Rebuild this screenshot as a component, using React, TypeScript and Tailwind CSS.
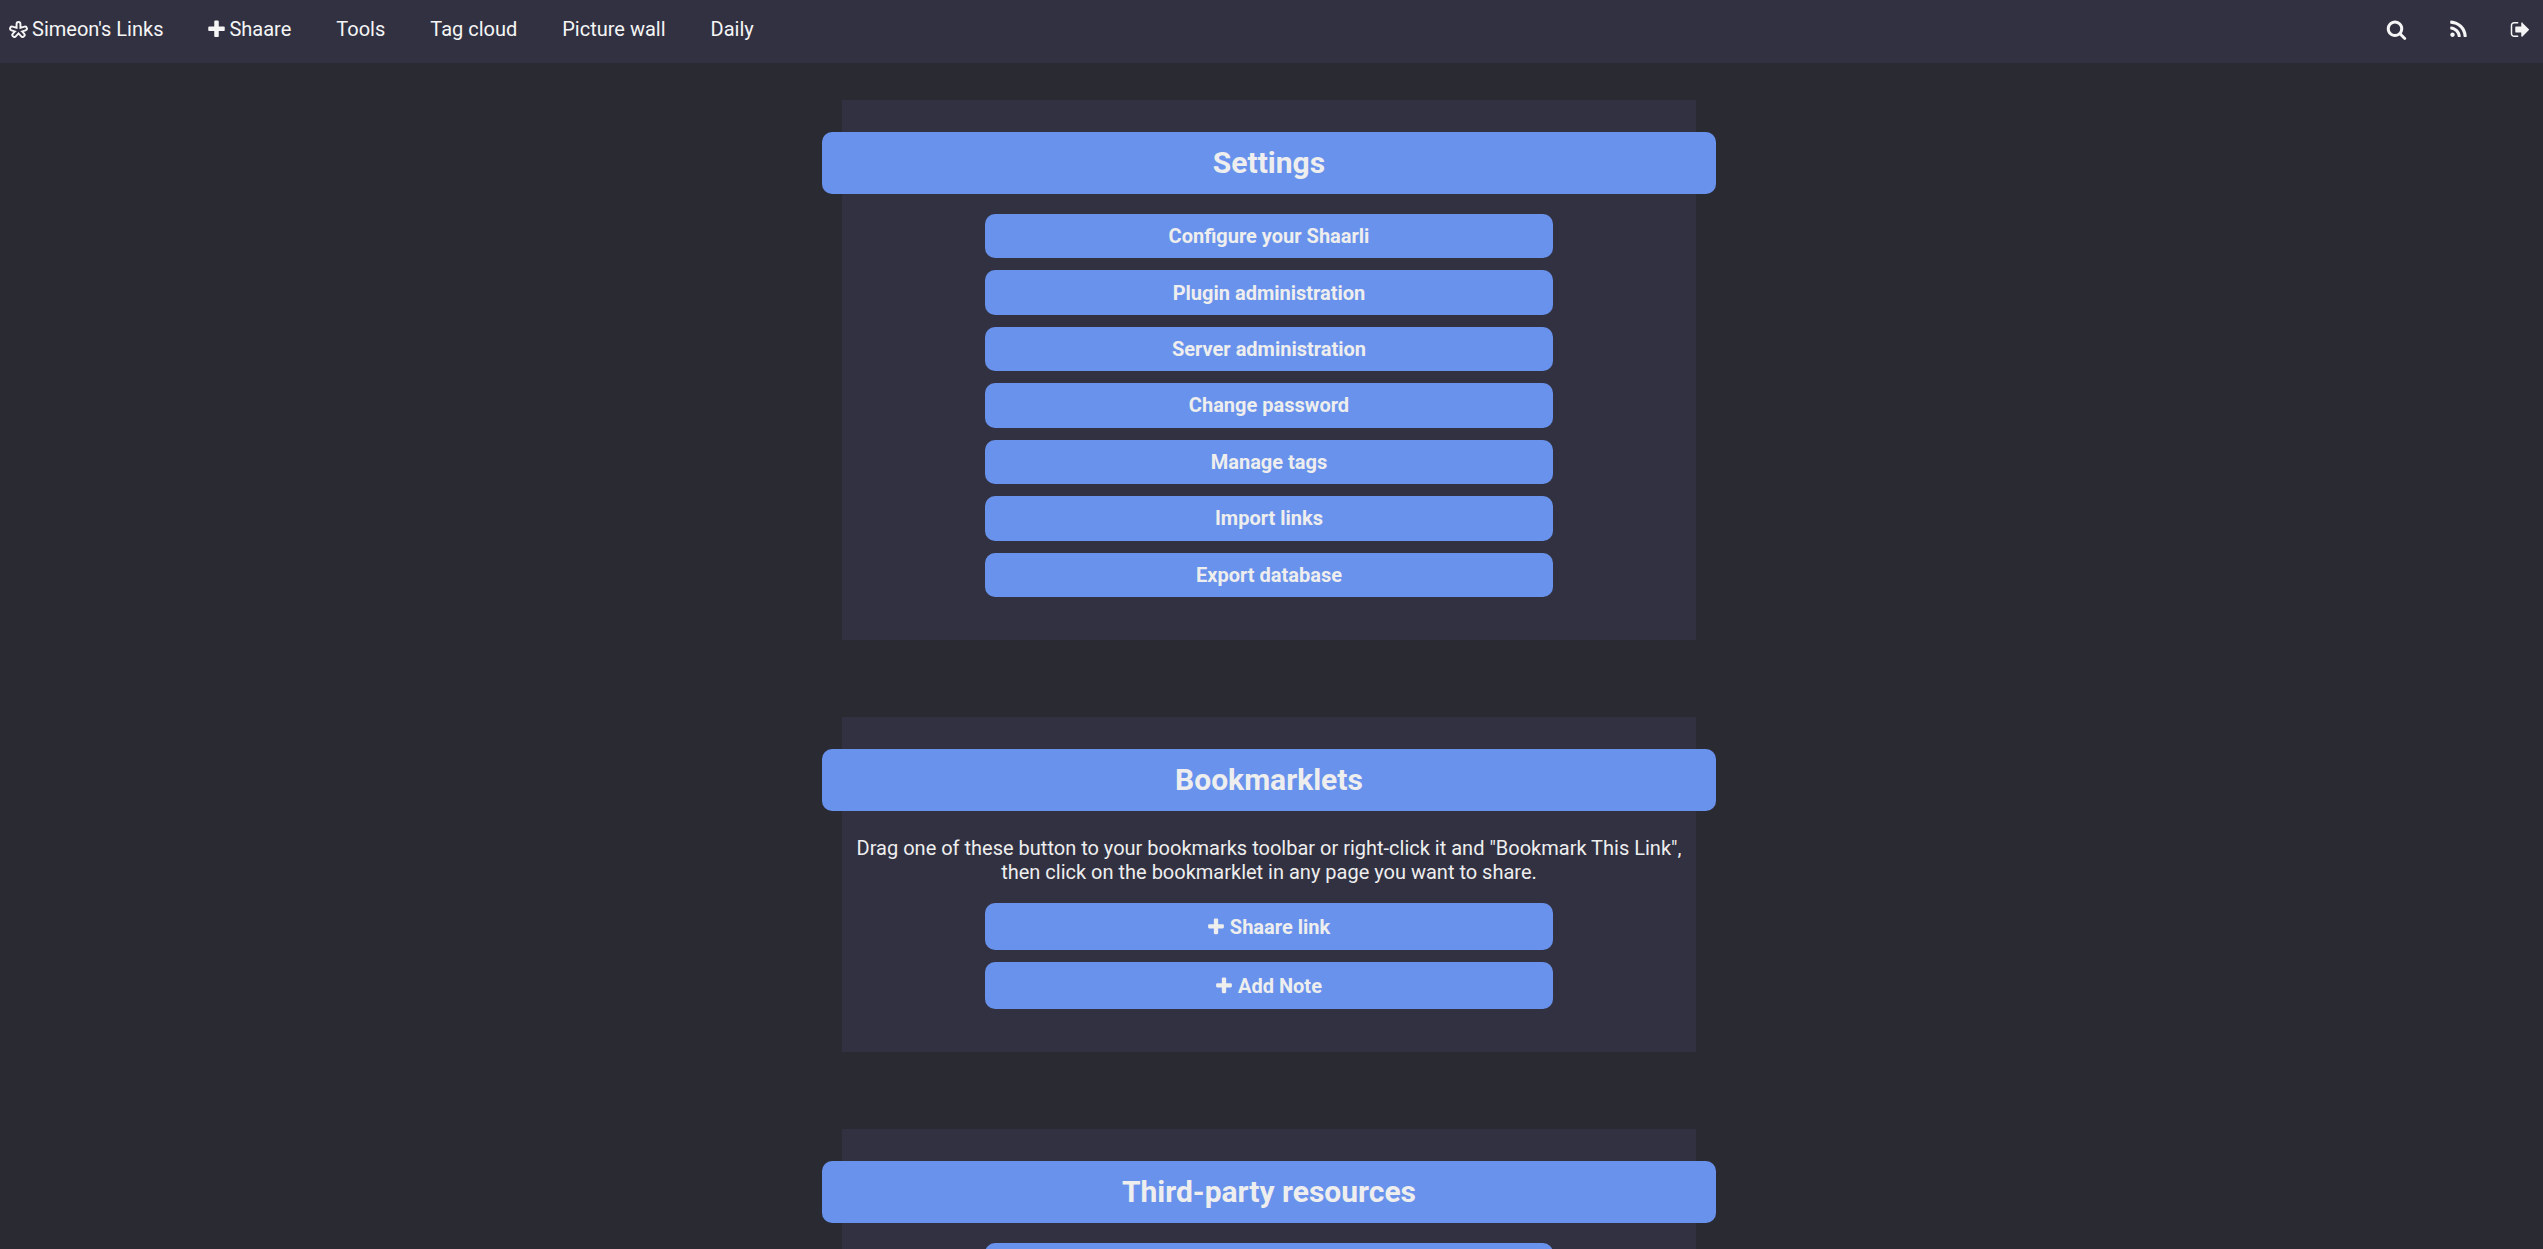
import type { ReactNode } from "react";

const ICONS = {
  plus: "M1600 736v192q0 40-28 68t-68 28h-416v416q0 40-28 68t-68 28h-192q-40 0-68-28t-28-68v-416h-416q-40 0-68-28t-28-68v-192q0-40 28-68t68-28h416v-416q0-40 28-68t68-28h192q40 0 68 28t28 68v416h416q40 0 68 28t28 68z",
  search:
    "M1216 832q0-185-131.5-316.5t-316.5-131.5-316.5 131.5-131.5 316.5 131.5 316.5 316.5 131.5 316.5-131.5 131.5-316.5zm512 832q0 52-38 90t-90 38q-54 0-90-38l-343-342q-179 124-399 124-143 0-273.5-55.5t-225-150-150-225-55.5-273.5 55.5-273.5 150-225 225-150 273.5-55.5 273.5 55.5 225 150 150 225 55.5 273.5q0 220-124 399l343 343q37 37 37 90z",
  rss: "M576 1344q0 80-56 136t-136 56-136-56-56-136 56-136 136-56 136 56 56 136zm512 123q2 28-17 48-18 21-47 21h-135q-25 0-43-16.5t-20-41.5q-22-229-184.5-391.5t-391.5-184.5q-25-2-41.5-20t-16.5-43v-135q0-29 21-47 17-17 43-17h5q160 13 306 80.5t259 181.5q114 113 181.5 259t80.5 306zm512 2q2 27-18 47-18 20-46 20h-143q-26 0-44.5-17.5t-19.5-42.5q-12-215-101-408.5t-231.5-336-336-231.5-408.5-102q-25-1-42.5-19.5t-17.5-43.5v-143q0-28 20-46 18-18 44-18h3q262 13 501.5 120t425.5 294q187 186 294 425.5t120 501.5z",
  signOut:
    "M704 1440q0 4 1 20t.5 26.5-3 23.5-10 19.5-20.5 6.5h-320q-119 0-203.5-84.5t-84.5-203.5v-704q0-119 84.5-203.5t203.5-84.5h320q13 0 22.5 9.5t9.5 22.5q0 4 1 20t.5 26.5-3 23.5-10 19.5-20.5 6.5h-320q-66 0-113 47t-47 113v704q0 66 47 113t113 47h312l11.5 1 11.5 3 8 5.5 7 9 2 13.5zm928-544q0 26-19 45l-544 544q-19 19-45 19t-45-19-19-45v-288h-448q-26 0-45-19t-19-45v-384q0-26 19-45t45-19h448v-288q0-26 19-45t45-19 45 19 19 45l544 544q19 19 19 45z",
};

function Icon({ name, className }: { name: keyof typeof ICONS; className: string }) {
  return (
    <svg viewBox="0 0 1792 1792" fill="currentColor" aria-hidden="true" className={className}>
      <path d={ICONS[name]} />
    </svg>
  );
}

function Logo() {
  const arms = "M9.5 9.5V3M9.5 9.500L3 7.500M9.500 9.500L16 7.500M9.500 9.500L5.300 14M9.500 9.500L13.700 14";
  return (
    <svg viewBox="0 0 19 17" fill="none" strokeLinecap="round" strokeLinejoin="round" aria-hidden="true" className="h-[17px] w-[19px]">
      <path d={arms} stroke="currentColor" strokeWidth="5.8" />
      <path d={arms} stroke="#313142" strokeWidth="1.9" />
    </svg>
  );
}

const NAV = ["Tools", "Tag cloud", "Picture wall", "Daily"];

const TOOLS = [
  { label: "Search", icon: "search" },
  { label: "RSS Feed", icon: "rss" },
  { label: "Logout", icon: "signOut" },
] as const;

const SETTINGS = [
  "Configure your Shaarli",
  "Plugin administration",
  "Server administration",
  "Change password",
  "Manage tags",
  "Import links",
  "Export database",
];

function Card({ title, children }: { title: string; children: ReactNode }) {
  return (
    <section className="flex w-[calc(100%/3+8px)] flex-col items-center bg-[#313142] pt-8 pb-[43px] text-center">
      <h2 className="-mx-5 mb-5 self-stretch rounded-[10px] bg-[#6992ec] py-[13px] text-[30px] leading-9 font-bold">
        {title}
      </h2>
      {children}
    </section>
  );
}

const listClass = "grid w-[calc(200%/3-1px)] gap-3";
const buttonClass = "flex items-center justify-center gap-1.5 rounded-[10px] bg-[#6992ec] font-bold";
const bookmarkletClass = buttonClass + " pt-3 pb-[11px]";

export default function App() {
  return (
    <div className="flex h-screen flex-col overflow-hidden bg-[#2a2a32] font-[Roboto,sans-serif] text-[20px] leading-6 text-[#eee]">
      <header className="flex shrink-0 items-start justify-between bg-[#313142] pt-[17px] pr-3 pb-[22px] pl-[9px] text-[#f5f5f5]">
        <nav className="flex gap-[45px]">
          <a href="#home" className="flex items-center gap-1">
            <Logo />
            Simeon's Links
          </a>
          <a href="#shaare" className="flex items-center gap-1">
            <Icon name="plus" className="-mx-[2px] size-[21px]" />
            Shaare
          </a>
          {NAV.map((label) => (
            <a key={label} href={"#" + label.toLowerCase().replace(" ", "-")}>
              {label}
            </a>
          ))}
        </nav>
        <nav className="flex h-6 items-center gap-[41px]">
          {TOOLS.map(({ label, icon }) => (
            <a key={label} href={"#" + icon} aria-label={label}>
              <Icon name={icon} className="size-[21px]" />
            </a>
          ))}
        </nav>
      </header>
      <main className="flex flex-col items-center gap-[77px] pt-[37px] pr-[5px]">
        <Card title="Settings">
          <div className={listClass + " min-h-[383px]"}>
            {SETTINGS.map((label) => (
              <a key={label} href={"#" + label.toLowerCase().replaceAll(" ", "-")} className={buttonClass}>
                {label}
              </a>
            ))}
          </div>
        </Card>
        <Card title="Bookmarklets">
          <p className="mt-[5px] mb-[19px]">
            Drag one of these button to your bookmarks toolbar or right-click it and "Bookmark This Link",
            <br />
            then click on the bookmarklet in any page you want to share.
          </p>
          <div className={listClass}>
            <a href="#shaare-link" className={bookmarkletClass}>
              <Icon name="plus" className="-mx-[2px] size-[20px]" />
              Shaare link
            </a>
            <a href="#add-note" className={bookmarkletClass}>
              <Icon name="plus" className="-mx-[2px] size-[20px]" />
              Add Note
            </a>
          </div>
        </Card>
        <Card title="Third-party resources">
          <div className={listClass}>
            <a href="#third-party" aria-label="Third-party plugins" className={buttonClass + " h-11"} />
          </div>
        </Card>
      </main>
    </div>
  );
}
